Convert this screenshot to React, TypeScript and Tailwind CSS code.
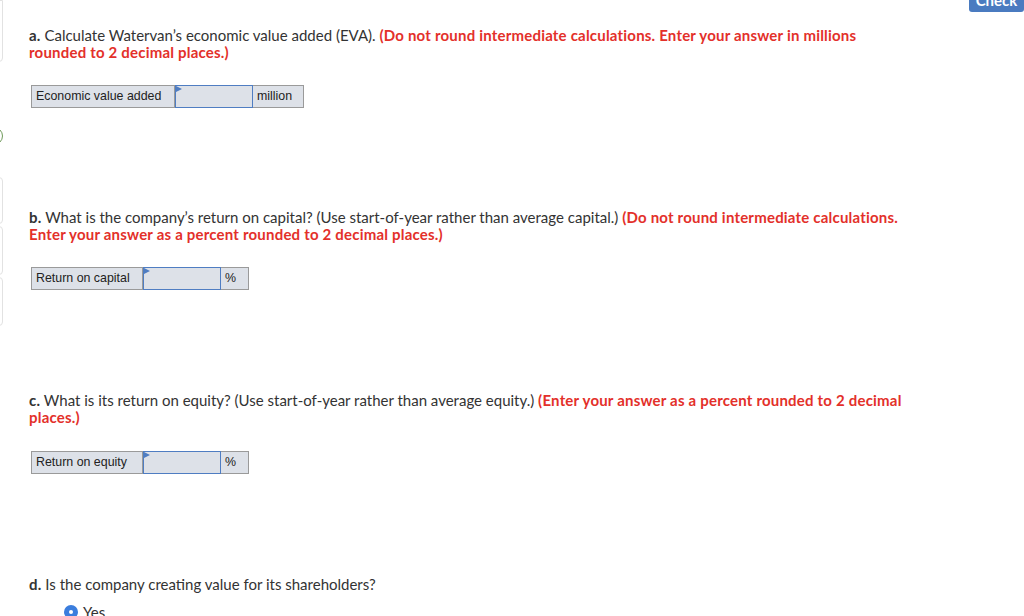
import React from "react";

const font = { fontFamily: "Lato, 'Noto Sans', sans-serif" };

function Prompt({ letter, text, hint }: { letter: string; text: string; hint: string }) {
  return (
    <p className="text-[15px] leading-[17px] text-[#333] pr-[108px]" style={font}>
      <span className="font-bold tracking-[0.2px]">{letter}</span> {text}{" "}
      <span className="font-bold tracking-[0.2px] text-[#e3302a]">{hint}</span>
    </p>
  );
}

function AnswerRow({ label, unit, labelW, unitW }: { label: string; unit: string; labelW: string; unitW: string }) {
  return (
    <div className="flex h-[23px] ml-[2px] font-['Liberation_Sans',Arial,sans-serif] text-[12.4px] text-[#222]">
      <div className={`${labelW} flex items-center pl-[4px] bg-[#dde1e8] border border-[#9a9a9a]`}>{label}</div>
      <div className="relative w-[78px] bg-[#dde1e8] border-[1.5px] border-[#4f7dc2]">
        <svg className="absolute left-0 top-0" width="6" height="7" viewBox="0 0 6 7">
          <path d="M0 0 L6 3 L0 6 Z" fill="#4f7dc2" />
        </svg>
      </div>
      <div className={`${unitW} flex items-center pl-[4px] bg-[#dde1e8] border border-[#9a9a9a] border-l-0`}>{unit}</div>
    </div>
  );
}

export default function App() {
  return (
    <div className="relative w-[1024px] h-[616px] overflow-hidden bg-white flex">
      {/* left rail: edges of panels that are mostly off screen */}
      <div className="w-[4px] shrink-0 flex flex-col">
        <div className="h-[62px] w-[20px] -ml-[17px] border border-[#e2e2e2] rounded-b-[4px]" />
        <div className="h-[18px] w-[20px] -ml-[17px] mt-[65px] border-[1.5px] border-[#6f9a5a] rounded-full" />
        <div className="h-[47px] w-[20px] -ml-[17px] mt-[32px] border border-[#e2e2e2] rounded-[4px]" />
        <div className="h-[49px] w-[20px] -ml-[17px] mt-[2px] border border-[#e2e2e2] rounded-[4px]" />
        <div className="h-[49px] w-[20px] -ml-[17px] mt-[2px] border border-[#e2e2e2] rounded-[4px]" />
      </div>

      <div className="flex-1 pl-[25px] pt-[27px]">
        <Prompt
          letter="a."
          text="Calculate Watervan’s economic value added (EVA)."
          hint="(Do not round intermediate calculations. Enter your answer in millions rounded to 2 decimal places.)"
        />
        <div className="mt-[24px]">
          <AnswerRow label="Economic value added" unit="million" labelW="w-[144px]" unitW="w-[51px]" />
        </div>

        <div className="mt-[101px]">
          <Prompt
            letter="b."
            text="What is the company’s return on capital? (Use start-of-year rather than average capital.)"
            hint="(Do not round intermediate calculations. Enter your answer as a percent rounded to 2 decimal places.)"
          />
        </div>
        <div className="mt-[24px]">
          <AnswerRow label="Return on capital" unit="%" labelW="w-[112px]" unitW="w-[28px]" />
        </div>

        <div className="mt-[102px]">
          <Prompt
            letter="c."
            text="What is its return on equity? (Use start-of-year rather than average equity.)"
            hint="(Enter your answer as a percent rounded to 2 decimal places.)"
          />
        </div>
        <div className="mt-[25px]">
          <AnswerRow label="Return on equity" unit="%" labelW="w-[112px]" unitW="w-[28px]" />
        </div>

        <div className="mt-[102px]">
          <p className="text-[15px] leading-[17px] text-[#333]" style={font}>
            <span className="font-bold tracking-[0.2px]">d.</span> Is the company creating value for its shareholders?
          </p>
          <div className="flex items-center gap-[5px] mt-[8px] ml-[35px] text-[15px] text-[#333]" style={font}>
            <span className="w-[14px] h-[14px] rounded-full bg-[#3b7ddd] flex items-center justify-center">
              <span className="w-[4px] h-[4px] rounded-full bg-white" />
            </span>
            Yes
          </div>
        </div>
      </div>

      {/* Check button, cut off by the top edge */}
      <div className="absolute right-0 -top-[12px] w-[55px] h-[24px] bg-[#4a7bc0] rounded-[3px] flex items-center justify-center text-white font-bold text-[15px]" style={font}>
        Check
      </div>
    </div>
  );
}
